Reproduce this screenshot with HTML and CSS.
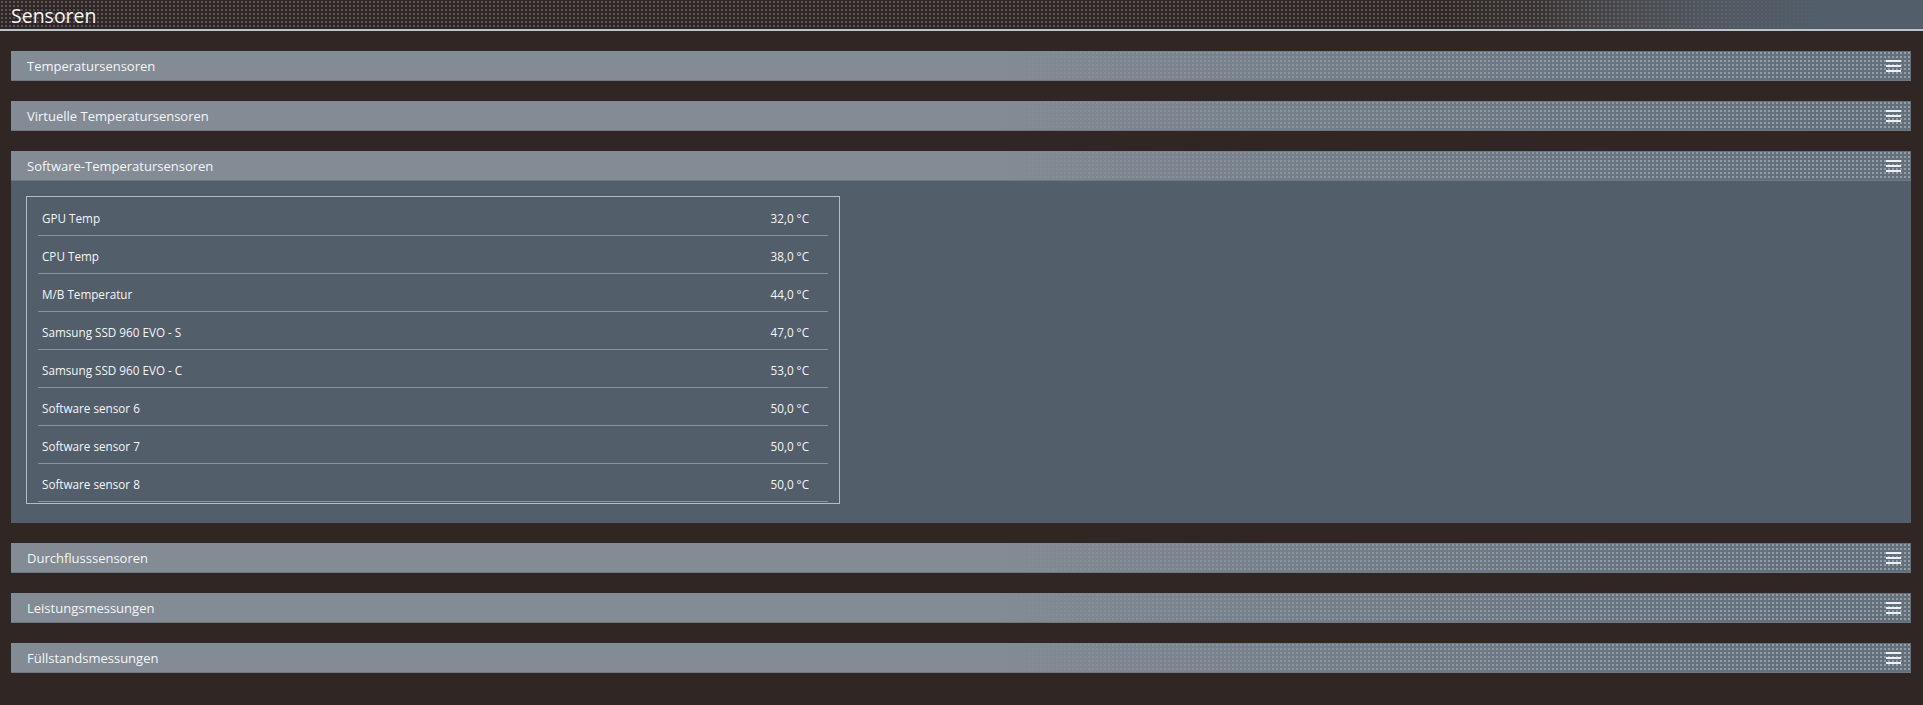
FILE: index.html
```html
<!DOCTYPE html>
<html lang="de">
<head>
<meta charset="utf-8">
<title>Sensoren</title>
<link rel="stylesheet" href="styles.css">
</head>
<body>
<header class="titlebar"><h1 class="title">Sensoren</h1></header>
<main class="panels">
  <section class="panel">
    <div class="panel-head"><span class="panel-title">Temperatursensoren</span><span class="menu"><i></i><i></i><i></i></span></div>
  </section>
  <section class="panel">
    <div class="panel-head"><span class="panel-title">Virtuelle Temperatursensoren</span><span class="menu"><i></i><i></i><i></i></span></div>
  </section>
  <section class="panel">
    <div class="panel-head"><span class="panel-title">Software-Temperatursensoren</span><span class="menu"><i></i><i></i><i></i></span></div>
    <div class="panel-body">
      <div class="sensor-table">
        <div class="row"><span>GPU Temp</span><span>32,0 °C</span></div>
        <div class="row"><span>CPU Temp</span><span>38,0 °C</span></div>
        <div class="row"><span>M/B Temperatur</span><span>44,0 °C</span></div>
        <div class="row"><span>Samsung SSD 960 EVO - S</span><span>47,0 °C</span></div>
        <div class="row"><span>Samsung SSD 960 EVO - C</span><span>53,0 °C</span></div>
        <div class="row"><span>Software sensor 6</span><span>50,0 °C</span></div>
        <div class="row"><span>Software sensor 7</span><span>50,0 °C</span></div>
        <div class="row"><span>Software sensor 8</span><span>50,0 °C</span></div>
      </div>
    </div>
  </section>
  <section class="panel">
    <div class="panel-head"><span class="panel-title">Durchflusssensoren</span><span class="menu"><i></i><i></i><i></i></span></div>
  </section>
  <section class="panel">
    <div class="panel-head"><span class="panel-title">Leistungsmessungen</span><span class="menu"><i></i><i></i><i></i></span></div>
  </section>
  <section class="panel">
    <div class="panel-head"><span class="panel-title">Füllstandsmessungen</span><span class="menu"><i></i><i></i><i></i></span></div>
  </section>
</main>
</body>
</html>
```
FILE: styles.css
```css
html, body {
  margin: 0;
  padding: 0;
}
body {
  background: #302725;
  font-family: "Open Sans", "Noto Sans", "Liberation Sans", sans-serif;
  color: #f2f4f6;
  width: 1923px;
  height: 705px;
  overflow: hidden;
}
.titlebar {
  height: 29px;
  border-bottom: 2px solid #b9c5cd;
  background:
    linear-gradient(90deg, rgba(82,94,106,0) 0%, rgba(82,94,106,0) 80%, rgba(82,94,106,0.55) 88%, #525e6a 95%, #525e6a 100%),
    linear-gradient(90deg, rgba(255,255,255,0) 75%, rgba(140,150,160,0.35) 90%),
    radial-gradient(circle at 2px 2px, #5c5553 0, #5c5553 1px, rgba(0,0,0,0) 1.3px),
    #2e2725;
  background-size: auto, auto, 4px 4px, auto;
  display: flex;
  align-items: center;
}
.title {
  margin: 0;
  padding: 2px 0 0 11px;
  font-size: 19.5px;
  font-weight: 400;
  line-height: 27px;
  color: #f4f6f8;
}
.panels {
  display: flex;
  flex-direction: column;
  gap: 20px;
  padding: 20px 12px 0 11px;
}
.panel {
  background: #525e6a;
}
.panel-head {
  height: 29px;
  border-bottom: 1px solid #6f7882;
  display: flex;
  align-items: center;
  justify-content: space-between;
  padding: 0 10px 0 16px;
  background:
    linear-gradient(90deg, #838b94 0%, #838b94 52%, rgba(131,139,148,0.6) 66%, rgba(131,139,148,0.15) 85%, rgba(131,139,148,0) 95%),
    radial-gradient(circle at 2px 2px, #949ea7 0, #949ea7 0.8px, rgba(0,0,0,0) 1.1px),
    #63707c;
  background-size: auto, 4px 4px, auto;
}
.panel-title {
  font-size: 13px;
  line-height: 27px;
  padding-top: 2px;
  color: #f4f6f8;
}
.menu {
  display: flex;
  flex-direction: column;
  gap: 3px;
  width: 15px;
  padding-top: 1px;
}
.menu i {
  display: block;
  height: 2px;
  background: #eef1f3;
}
.panel-body {
  padding: 15px 15px 19px 15px;
}
.sensor-table {
  width: 790px;
  border: 1px solid #b4bbc2;
  padding: 1px 11px;
}
.row {
  height: 37px;
  border-bottom: 1px solid #8b949c;
  display: flex;
  align-items: center;
  justify-content: space-between;
  padding: 2px 19px 0 4px;
  box-sizing: border-box;
  height: 38px;
  font-size: 11.7px;
  color: #f4f6f8;
}
```
